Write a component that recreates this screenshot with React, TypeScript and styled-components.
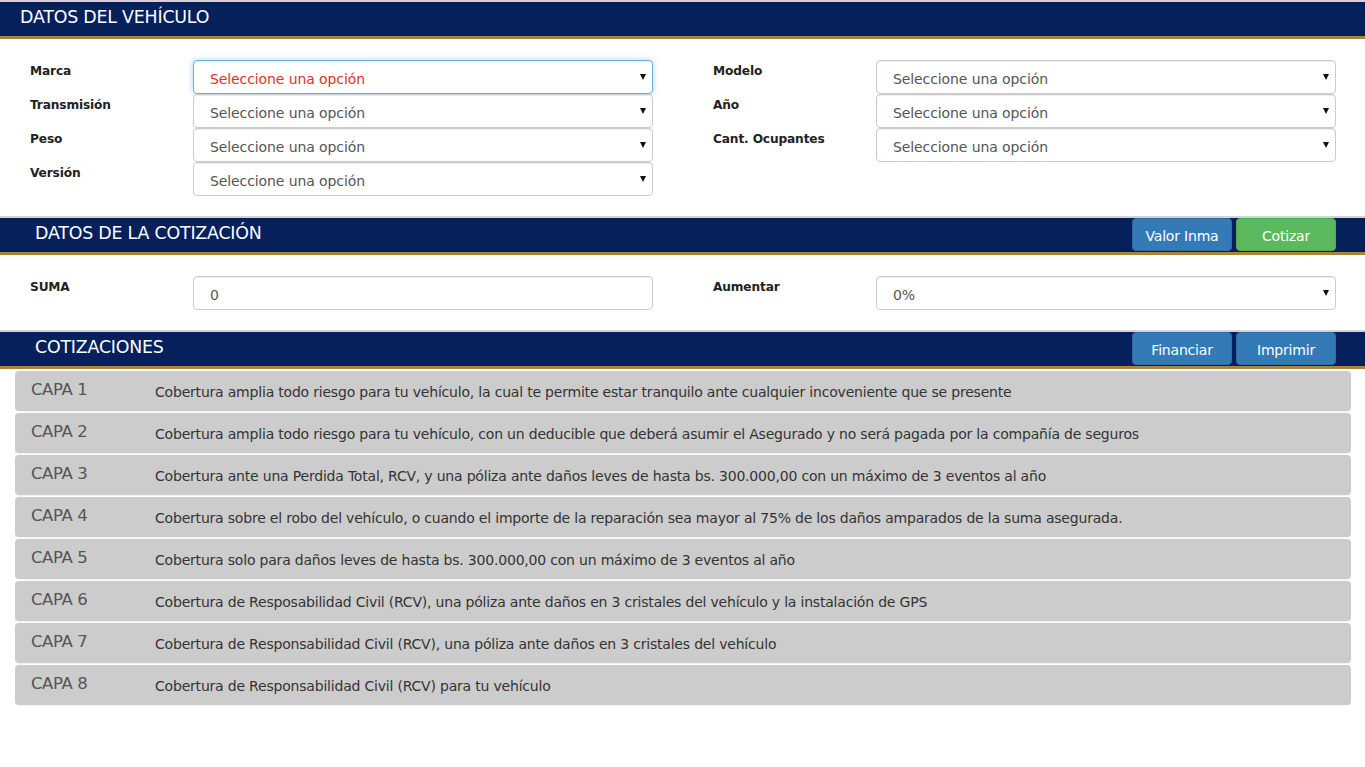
import React from 'react';
import styled, { createGlobalStyle } from 'styled-components';

const GlobalStyle = createGlobalStyle`
  html, body {
    margin: 0;
    padding: 0;
    background: #ffffff;
    font-family: "DejaVu Sans", "Liberation Sans", sans-serif;
  }
  * { box-sizing: border-box; }
`;

const Page = styled.div`
  width: 1365px;
  min-height: 767px;
  background: #fff;
`;

const HeaderBar = styled.div<{ $indent: number }>`
  display: flex;
  align-items: center;
  justify-content: space-between;
  height: 39px;
  background: #05205a;
  border-top: 2px solid #d3d3d3;
  border-bottom: 3px solid #a8853d;
  padding-left: ${p => p.$indent}px;
  padding-right: 29px;
`;

const HeaderTitle = styled.h2`
  margin: 0;
  margin-top: -4px;
  font-size: 17.4px;
  font-weight: normal;
  color: #ffffff;
  letter-spacing: -0.2px;
`;

const HeaderActions = styled.div`
  display: flex;
  gap: 4px;
  align-self: flex-start;
`;

const ActionButton = styled.button<{ $tone: 'blue' | 'green' }>`
  width: 100px;
  height: 33px;
  border: 1px solid ${p => (p.$tone === 'green' ? '#4cae4c' : '#2e6da4')};
  border-radius: 4px;
  background: ${p => (p.$tone === 'green' ? '#5cb85c' : '#337ab7')};
  color: #fff;
  font-family: inherit;
  font-size: 14px;
  letter-spacing: -0.2px;
  padding: 2px 0 0;
  cursor: pointer;
`;

const FormBlock = styled.div<{ $top: number; $bottom: number }>`
  display: grid;
  grid-template-columns: 623px 623px;
  column-gap: 60px;
  padding: ${p => p.$top}px 29px ${p => p.$bottom}px 30px;
`;

const Column = styled.div`
  display: flex;
  flex-direction: column;
`;

const Field = styled.div`
  display: grid;
  grid-template-columns: 163px 460px;
  height: 34px;
`;

const Label = styled.label`
  padding-top: 4px;
  font-size: 12.2px;
  font-weight: bold;
  color: #222;
  letter-spacing: -0.15px;
`;

const SelectWrap = styled.div`
  position: relative;
  height: 34px;
`;

const SelectBox = styled.div<{ $focus?: boolean; $red?: boolean }>`
  height: 34px;
  display: flex;
  align-items: center;
  padding: 3px 16px 0;
  border: 1px solid ${p => (p.$focus ? '#66afe9' : '#cccccc')};
  border-radius: 4px;
  box-shadow: ${p =>
    p.$focus
      ? 'inset 0 1px 1px rgba(0,0,0,.075), 0 0 6px rgba(102,175,233,.5)'
      : 'inset 0 1px 1px rgba(0,0,0,.075)'};
  background: #fff;
  font-size: 14px;
  color: ${p => (p.$red ? '#e0312e' : '#555555')};
  letter-spacing: -0.1px;
`;

const Arrow = styled.span`
  position: absolute;
  right: 7px;
  top: 14px;
  width: 0;
  height: 0;
  border-left: 3px solid transparent;
  border-right: 3px solid transparent;
  border-top: 6px solid #111;
`;

const Spacer = styled.div`
  height: 34px;
`;

const CapaList = styled.div`
  display: flex;
  flex-direction: column;
  gap: 2px;
  padding: 2px 14px 0 15px;
`;

const CapaRow = styled.div`
  display: grid;
  grid-template-columns: 124px 1fr;
  align-items: start;
  height: 40px;
  padding: 9px 0 0 16px;
  background: #cccccc;
  border-radius: 4px;
  box-shadow: 0 1px 1px rgba(0,0,0,.05);
`;

const CapaName = styled.div`
  font-size: 16.5px;
  color: #555;
  font-weight: normal;
  letter-spacing: -0.4px;
`;

const CapaText = styled.div`
  padding-top: 4px;
  font-size: 14px;
  color: #333;
  letter-spacing: -0.2px;
`;

type FieldDef = { label: string; value: string; focus?: boolean; red?: boolean };

const Select = ({ value, focus, red }: { value: string; focus?: boolean; red?: boolean }) => (
  <SelectWrap>
    <SelectBox $focus={focus} $red={red}>{value}</SelectBox>
    <Arrow />
  </SelectWrap>
);

const InputBox = ({ value }: { value: string }) => (
  <SelectWrap>
    <SelectBox>{value}</SelectBox>
  </SelectWrap>
);

const placeholder = 'Seleccione una opción';

const leftFields: FieldDef[] = [
  { label: 'Marca', value: placeholder, focus: true, red: true },
  { label: 'Transmisión', value: placeholder },
  { label: 'Peso', value: placeholder },
  { label: 'Versión', value: placeholder },
];

const rightFields: FieldDef[] = [
  { label: 'Modelo', value: placeholder },
  { label: 'Año', value: placeholder },
  { label: 'Cant. Ocupantes', value: placeholder },
];

const capas = [
  'Cobertura amplia todo riesgo para tu vehículo, la cual te permite estar tranquilo ante cualquier incoveniente que se presente',
  'Cobertura amplia todo riesgo para tu vehículo, con un deducible que deberá asumir el Asegurado y no será pagada por la compañía de seguros',
  'Cobertura ante una Perdida Total, RCV, y una póliza ante daños leves de hasta bs. 300.000,00 con un máximo de 3 eventos al año',
  'Cobertura sobre el robo del vehículo, o cuando el importe de la reparación sea mayor al 75% de los daños amparados de la suma asegurada.',
  'Cobertura solo para daños leves de hasta bs. 300.000,00 con un máximo de 3 eventos al año',
  'Cobertura de Resposabilidad Civil (RCV), una póliza ante daños en 3 cristales del vehículo y la instalación de GPS',
  'Cobertura de Responsabilidad Civil (RCV), una póliza ante daños en 3 cristales del vehículo',
  'Cobertura de Responsabilidad Civil (RCV) para tu vehículo',
];

export default function App() {
  return (
    <Page>
      <GlobalStyle />
      <HeaderBar $indent={20}>
        <HeaderTitle>DATOS DEL VEHÍCULO</HeaderTitle>
      </HeaderBar>
      <FormBlock $top={21} $bottom={20}>
        <Column>
          {leftFields.map(f => (
            <Field key={f.label}>
              <Label>{f.label}</Label>
              <Select value={f.value} focus={f.focus} red={f.red} />
            </Field>
          ))}
        </Column>
        <Column>
          {rightFields.map(f => (
            <Field key={f.label}>
              <Label>{f.label}</Label>
              <Select value={f.value} />
            </Field>
          ))}
          <Spacer />
        </Column>
      </FormBlock>

      <HeaderBar $indent={35}>
        <HeaderTitle>DATOS DE LA COTIZACIÓN</HeaderTitle>
        <HeaderActions>
          <ActionButton $tone="blue">Valor Inma</ActionButton>
          <ActionButton $tone="green">Cotizar</ActionButton>
        </HeaderActions>
      </HeaderBar>
      <FormBlock $top={21} $bottom={20}>
        <Column>
          <Field>
            <Label>SUMA</Label>
            <InputBox value="0" />
          </Field>
        </Column>
        <Column>
          <Field>
            <Label>Aumentar</Label>
            <Select value="0%" />
          </Field>
        </Column>
      </FormBlock>

      <HeaderBar $indent={35}>
        <HeaderTitle>COTIZACIONES</HeaderTitle>
        <HeaderActions>
          <ActionButton $tone="blue">Financiar</ActionButton>
          <ActionButton $tone="blue">Imprimir</ActionButton>
        </HeaderActions>
      </HeaderBar>
      <CapaList>
        {capas.map((text, i) => (
          <CapaRow key={i}>
            <CapaName>CAPA {i + 1}</CapaName>
            <CapaText>{text}</CapaText>
          </CapaRow>
        ))}
      </CapaList>
    </Page>
  );
}
